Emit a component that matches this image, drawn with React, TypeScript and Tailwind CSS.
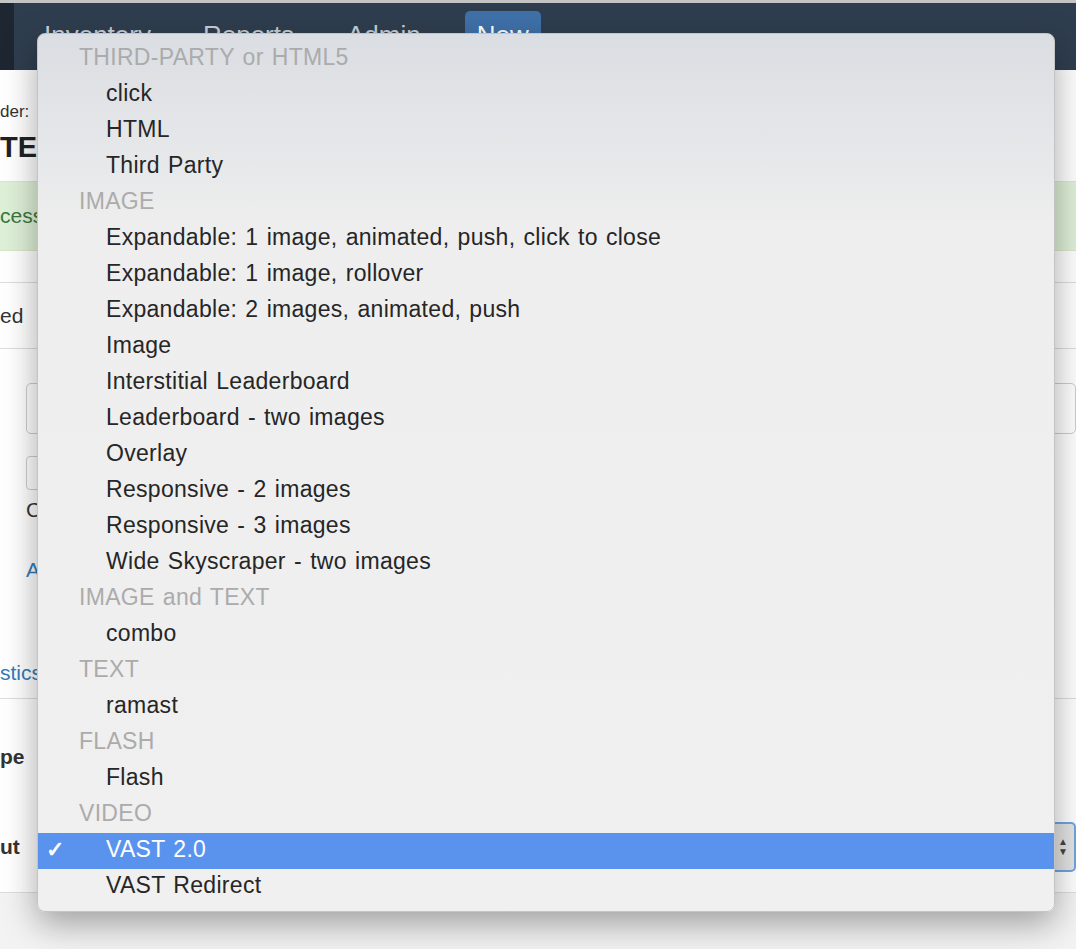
const groups: { label: string; items: string[] }[] = [
  { label: "THIRD-PARTY or HTML5", items: ["click", "HTML", "Third Party"] },
  {
    label: "IMAGE",
    items: [
      "Expandable: 1 image, animated, push, click to close",
      "Expandable: 1 image, rollover",
      "Expandable: 2 images, animated, push",
      "Image",
      "Interstitial Leaderboard",
      "Leaderboard - two images",
      "Overlay",
      "Responsive - 2 images",
      "Responsive - 3 images",
      "Wide Skyscraper - two images",
    ],
  },
  { label: "IMAGE and TEXT", items: ["combo"] },
  { label: "TEXT", items: ["ramast"] },
  { label: "FLASH", items: ["Flash"] },
  { label: "VIDEO", items: ["VAST 2.0", "VAST Redirect"] },
];

const selected = "VAST 2.0";

const NavBar = () => (
  <div className="flex h-[67px] bg-[#2f3e4f]">
    <div className="w-[14px] bg-[#1d2631]" />
    <div className="flex items-start pl-[30px] text-[26px] leading-[30px] text-[#c9d0d8]">
      <span className="mt-[17px]">Inventory</span>
      <span className="mt-[17px] ml-[52px]">Reports</span>
      <span className="mt-[17px] ml-[53px]">Admin</span>
      <span className="mt-[8px] ml-[44px] rounded-[5px] bg-[#3f71a9] px-[12px] pt-[9px] pb-[12px] text-white">New</span>
    </div>
  </div>
);

const PageBehind = () => (
  <div className="flex flex-col text-[#333]">
    <div className="mt-[32px] text-[17px] leading-[20px]">der:</div>
    <div className="mt-[11px] text-[29px] font-bold leading-[28px] text-[#222]">TES</div>
    <div className="mt-[20px] flex h-[70px] items-center border-y border-[#d6e9c6] bg-[#dff0d8] text-[21px] text-[#3c763d]">
      cess
    </div>
    <div className="h-[32px] border-b border-[#dddddd]" />
    <div className="flex h-[66px] items-center border-b border-[#dddddd] text-[21px]">ed</div>
    <div className="ml-[26px] mt-[34px] h-[51px] rounded-[5px] border border-[#cccccc]" />
    <div className="ml-[26px] mt-[22px] h-[34px] w-[80px] rounded-[4px] border border-[#cccccc]" />
    <div className="ml-[26px] mt-[8px] text-[21px] leading-[24px]">C</div>
    <div className="ml-[26px] mt-[36px] text-[21px] leading-[24px] text-[#337ab7]">A</div>
    <div className="mt-[65px] flex h-[52px] items-center border-b border-[#dddddd] text-[21px] text-[#337ab7]">
      stics
    </div>
    <div className="mt-[46px] text-[21px] font-bold leading-[24px]">pe</div>
    <div className="mt-[53px] flex h-[50px] items-center">
      <span className="text-[21px] font-bold leading-[24px]">ut</span>
      <div className="ml-auto flex h-[50px] w-[60px] items-center justify-end rounded-[5px] border-2 border-[#6ea5e2] bg-[#e4e4e4] pr-[6px]">
        <div className="flex flex-col items-center text-[10px] leading-[10px] text-[#444]">
          <span>▲</span>
          <span>▼</span>
        </div>
      </div>
    </div>
    <div className="h-[21px] border-b border-[#dddddd]" />
    <div className="h-[60px] bg-[#f3f3f3]" />
  </div>
);

const Dropdown = () => (
  <div className="absolute left-[37px] top-[33px] h-[879px] w-[1018px] overflow-hidden rounded-[8px] border border-[#c4c4c4] bg-gradient-to-b from-[#dadde2] via-[#eeeeee] via-[22%] to-[#f0f0f0] pt-[7px] text-[23px] tracking-[0.3px] [word-spacing:1.5px] shadow-[0_12px_34px_rgba(0,0,0,0.35)]">
    {groups.map((g) => (
      <div key={g.label}>
        <div className="flex h-[36px] items-center pb-[4px] pl-[41px] text-[#ababab]">{g.label}</div>
        {g.items.map((item) =>
          item === selected ? (
            <div key={item} className="flex h-[36px] items-center bg-[#5a93ee] pb-[4px] text-white">
              <span className="w-[68px] pl-[8px] text-[22px] font-bold">✓</span>
              <span>{item}</span>
            </div>
          ) : (
            <div key={item} className="flex h-[36px] items-center pb-[4px] pl-[68px] text-[#262626]">
              {item}
            </div>
          )
        )}
      </div>
    ))}
  </div>
);

export default function App() {
  return (
    <div className="relative h-[949px] w-[1076px] overflow-hidden bg-white font-['Liberation_Sans',Arial,sans-serif]">
      <div className="h-[3px] bg-[#c4c4c4]" />
      <NavBar />
      <PageBehind />
      <Dropdown />
    </div>
  );
}
